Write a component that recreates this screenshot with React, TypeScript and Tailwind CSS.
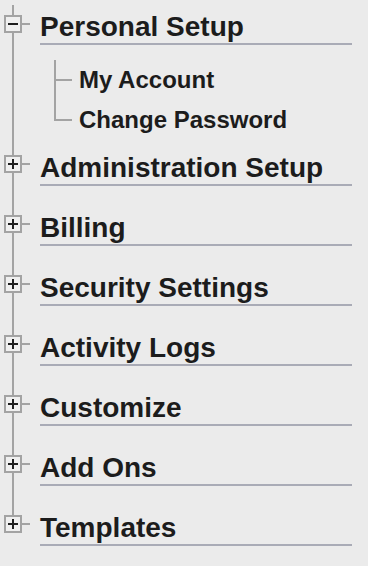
import React from "react";

type Section = { title: string; open?: boolean; children?: string[] };

const sections: Section[] = [
  { title: "Personal Setup", open: true, children: ["My Account", "Change Password"] },
  { title: "Administration Setup" },
  { title: "Billing" },
  { title: "Security Settings" },
  { title: "Activity Logs" },
  { title: "Customize" },
  { title: "Add Ons" },
  { title: "Templates" },
];

function ToggleBox({ open }: { open?: boolean }) {
  return (
    <div className="flex items-center">
      <div className="ml-[4px] w-[18px] h-[18px] border-2 border-[#a3a3a3] bg-[#efefef] flex items-center justify-center relative">
        <div className="absolute w-[10px] h-[2px] bg-[#1e1e1e]" />
        {!open && <div className="absolute w-[2px] h-[10px] bg-[#1e1e1e]" />}
      </div>
      <div className="w-[8px] h-[2px] bg-[#a3a3a3]" />
    </div>
  );
}

export default function App() {
  return (
    <div
      className="min-h-screen w-full bg-[#ebebeb] text-[#1c1c1c]"
      style={{ fontFamily: '"Liberation Sans", Arial, Helvetica, sans-serif' }}
    >
      {sections.map((s, i) => {
        const first = i === 0;
        const last = i === sections.length - 1;
        return (
          <div key={s.title} className="flex">
            <div className="w-[40px] shrink-0 flex flex-col">
              <div
                className={
                  first
                    ? "mt-[5px] h-[10px] w-[2px] ml-[12px] bg-[#a3a3a3]"
                    : "h-[17px] w-[2px] ml-[12px] bg-[#a3a3a3]"
                }
              />
              <ToggleBox open={s.open} />
              {!last && <div className="flex-1 w-[2px] ml-[12px] bg-[#a3a3a3]" />}
            </div>
            <div className={first ? "flex-1 pt-[11px]" : "flex-1 pt-[14px] pb-[12px]"}>
              <div className="mr-[16px] border-b-2 border-[#a9abb6] text-[28px] leading-[32px] font-bold whitespace-nowrap">
                {s.title}
              </div>
              {s.children && (
                <div className="pt-[15px] flex flex-col">
                  {s.children.map((c, j) => {
                    const lastChild = j === s.children!.length - 1;
                    return (
                      <div key={c} className={lastChild ? "flex h-[38px]" : "flex h-[40px]"}>
                        <div className="ml-[14px] w-[18px] flex flex-col">
                          <div className="h-[21px] border-l-2 border-b-2 border-[#a3a3a3]" />
                          {!lastChild && <div className="flex-1 border-l-2 border-[#a3a3a3]" />}
                        </div>
                        <div className="ml-[7px] text-[24px] leading-[40px] font-bold whitespace-nowrap">
                          {c}
                        </div>
                      </div>
                    );
                  })}
                </div>
              )}
            </div>
          </div>
        );
      })}
    </div>
  );
}
